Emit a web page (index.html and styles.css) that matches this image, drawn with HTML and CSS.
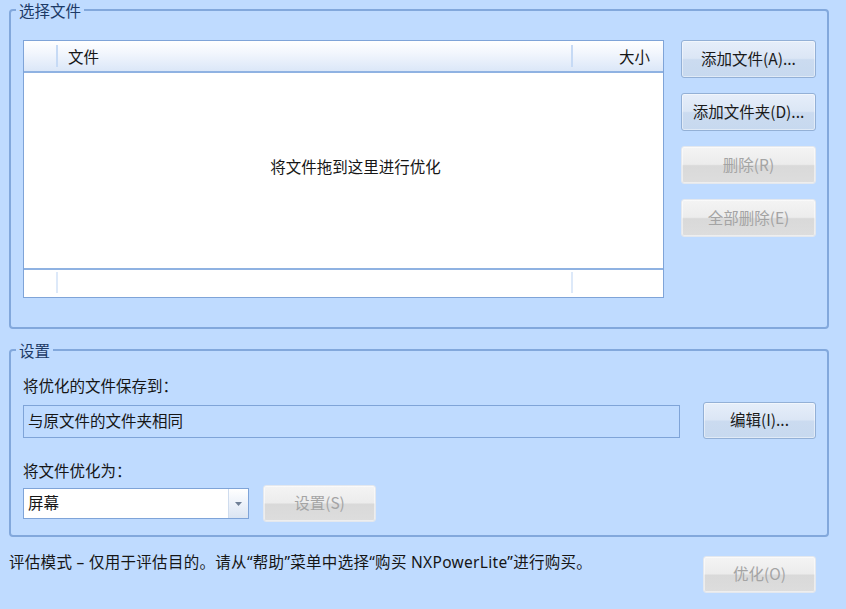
FILE: index.html
```html
<!DOCTYPE html>
<html lang="zh-CN">
<head>
<meta charset="utf-8">
<title>NXPowerLite</title>
<link rel="stylesheet" href="styles.css">
</head>
<body>
<div class="app">
  <fieldset class="group group-files">
    <legend>选择文件</legend>
    <div class="files-body">
      <div class="list">
        <div class="list-head">
          <div class="col col-icon"></div>
          <div class="col col-name">文件</div>
          <div class="col col-size">大小</div>
        </div>
        <div class="list-empty">将文件拖到这里进行优化</div>
        <div class="list-foot">
          <div class="col col-icon"></div>
          <div class="col col-name"></div>
          <div class="col col-size"></div>
        </div>
      </div>
      <div class="side-buttons">
        <button class="btn btn-side">添加文件(A)...</button>
        <button class="btn btn-side">添加文件夹(D)...</button>
        <button class="btn btn-side" disabled>删除(R)</button>
        <button class="btn btn-side" disabled>全部删除(E)</button>
      </div>
    </div>
  </fieldset>

  <fieldset class="group group-settings">
    <legend>设置</legend>
    <div class="label label-save">将优化的文件保存到：</div>
    <div class="row row-save">
      <div class="textbox">与原文件的文件夹相同</div>
      <button class="btn btn-small">编辑(I)...</button>
    </div>
    <div class="label label-opt">将文件优化为：</div>
    <div class="row row-opt">
      <div class="combo">
        <span class="combo-text">屏幕</span>
        <span class="combo-drop">
          <svg width="7" height="4" viewBox="0 0 7 4"><path d="M0 0h7L3.5 4z" fill="#6f7f96"/></svg>
        </span>
      </div>
      <button class="btn btn-small" disabled>设置(S)</button>
    </div>
  </fieldset>

  <div class="footer">
    <div class="notice">评估模式 – 仅用于评估目的。请从“帮助”菜单中选择“购买 NXPowerLite”进行购买。</div>
    <button class="btn btn-small btn-opt" disabled>优化(O)</button>
  </div>
</div>
</body>
</html>
```

FILE: styles.css
```css
html, body {
  margin: 0;
  padding: 0;
  background: #bfdbff;
}

body {
  width: 846px;
  height: 609px;
  overflow: hidden;
  font-family: "Noto Sans CJK SC", "Microsoft YaHei", "Noto Sans", sans-serif;
  font-size: 15.5px;
  color: #161616;
}

.app {
  width: 820px;
  padding-left: 9px;
}

.group {
  margin: 0;
  border: 2px solid #82a8dc;
  border-radius: 4px;
  min-width: 0;
}

.group legend {
  padding: 0 3px;
  margin-left: -7px;
  line-height: 20px;
  color: #1d3a66;
}

.group-files {
  padding: 20px 11px 29px 12px;
}

.group-settings {
  margin-top: 11px;
  padding: 15px 11px 13px 12px;
}

.files-body {
  display: flex;
  gap: 17px;
}

/* file list */
.list {
  width: 641px;
  height: 258px;
  box-sizing: border-box;
  border: 1px solid #7fa4d8;
  background: #fff;
  display: flex;
  flex-direction: column;
}

.list-head {
  height: 32px;
  box-sizing: border-box;
  border-bottom: 2px solid #8fb2e2;
  background: linear-gradient(to bottom, #ffffff 0%, #f2f6fd 40%, #dbe7f8 100%);
  display: flex;
  align-items: stretch;
}

.list-foot {
  height: 29px;
  box-sizing: border-box;
  border-top: 2px solid #8fb2e2;
  display: flex;
}

.col {
  display: flex;
  align-items: center;
  box-sizing: border-box;
}

.col-icon {
  width: 32px;
}

.col-name {
  flex: 1;
  padding-left: 10px;
  border-left: 2px solid #c6daf5;
  margin: 4px 0;
}

.col-size {
  width: 92px;
  justify-content: flex-end;
  padding-right: 13px;
  border-left: 2px solid #c6daf5;
  margin: 4px 0;
}

.list-foot .col-name,
.list-foot .col-size {
  border-left-color: #dde9f9;
  margin: 2px 0 4px;
}

.list-empty {
  flex: 1;
  display: flex;
  align-items: center;
  justify-content: center;
  padding-left: 24px;
  padding-bottom: 10px;
}

/* buttons */
.side-buttons {
  display: flex;
  flex-direction: column;
  gap: 15px;
}

.btn {
  font-family: inherit;
  font-size: 15.5px;
  color: #1a1a1a;
  border: 1px solid #93b0d6;
  border-radius: 3px;
  background: linear-gradient(to bottom, #e6eefa 0%, #dbe6f5 48%, #cbdbf0 52%, #c7d9ef 100%);
  box-shadow: inset 0 0 0 1px rgba(255, 255, 255, 0.45);
  padding: 0 0 3px;
  margin: 0;
  cursor: default;
}

.btn:disabled {
  color: #a4a4a4;
  border-color: #e4e8ee;
  background: linear-gradient(to bottom, #f4f4f4 0%, #ececec 48%, #d9d9d9 52%, #dddddd 100%);
  box-shadow: inset 0 0 0 1px rgba(255, 255, 255, 0.5);
}

.btn-side {
  width: 135px;
  height: 38px;
}

.btn-small {
  width: 113px;
  height: 37px;
}

/* settings */
.label {
  line-height: 20px;
  color: #161616;
}

.label-save {
  margin-bottom: 7px;
}

.label-opt {
  margin-top: 21px;
  margin-bottom: 5px;
}

.row {
  display: flex;
  align-items: center;
}

.row-save {
  gap: 23px;
}

.textbox {
  width: 657px;
  height: 33px;
  box-sizing: border-box;
  border: 1px solid #7fa4d8;
  display: flex;
  align-items: center;
  padding: 0 0 3px 4px;
  margin-top: 2px;
}

.row-opt {
  gap: 14px;
}

.combo {
  width: 226px;
  height: 31px;
  box-sizing: border-box;
  border: 1px solid #7fa4d8;
  background: #fff;
  display: flex;
  align-items: stretch;
}

.combo-text {
  flex: 1;
  display: flex;
  align-items: center;
  padding: 0 0 3px 4px;
}

.combo-drop {
  width: 19px;
  border-left: 1px solid #cfdcee;
  background: linear-gradient(to bottom, #ffffff 0%, #edf2fa 50%, #dbe5f3 100%);
  display: flex;
  align-items: center;
  justify-content: center;
}

/* footer */
.footer {
  display: flex;
  justify-content: space-between;
  align-items: flex-start;
  padding-top: 15px;
  padding-right: 13px;
}

.notice {
  line-height: 20px;
  font-family: "Noto Sans", "Noto Sans CJK SC", sans-serif;
  letter-spacing: 0.3px;
}

.btn-opt {
  margin-top: 4px;
}
```
